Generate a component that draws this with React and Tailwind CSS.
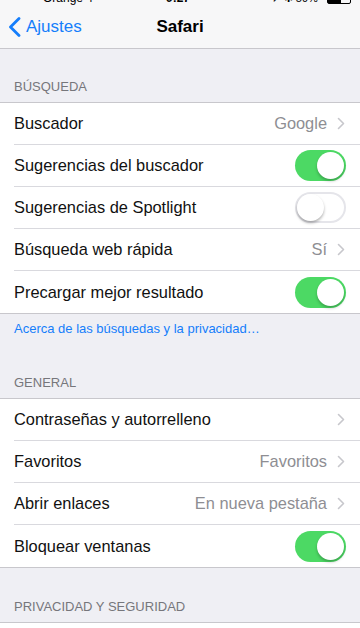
import React from "react";

const font = { fontFamily: '"Liberation Sans", Arial, sans-serif' };

function Chevron() {
  return (
    <svg width="8" height="13" viewBox="0 0 8 13" className="ml-[10px] shrink-0">
      <polyline points="1.5,1.5 6.5,6.5 1.5,11.5" fill="none" stroke="#c7c7cc" strokeWidth="1.6" strokeLinecap="round" strokeLinejoin="round" />
    </svg>
  );
}

function Toggle({ on }) {
  return on ? (
    <div className="w-[51px] h-[31px] rounded-full bg-[#4cd964] relative shrink-0">
      <div className="absolute right-[2px] top-[2px] w-[27px] h-[27px] rounded-full bg-white shadow-[0_2px_3px_rgba(0,0,0,0.25)]" />
    </div>
  ) : (
    <div className="w-[51px] h-[31px] rounded-full bg-white border-2 border-[#e5e5ea] relative shrink-0 box-border">
      <div className="absolute left-0 top-0 w-[27px] h-[27px] rounded-full bg-white shadow-[0_2px_3px_rgba(0,0,0,0.3)]" />
    </div>
  );
}

function Row({ label, value, chevron, toggle, last }) {
  return (
    <div className="pl-[14px] bg-white">
      <div className={`h-[42px] flex items-center pr-[15px] box-border ${last ? "" : "border-b border-[#d9d9de]"}`}>
        <span className="flex-1 text-[16.4px] text-[#111]">{label}</span>
        {value && <span className="text-[16.4px] text-[#8e8e93]">{value}</span>}
        {chevron && <Chevron />}
        {toggle !== undefined && <div className="-mr-[1px]"><Toggle on={toggle} /></div>}
      </div>
    </div>
  );
}

function Group({ children }) {
  return <div className="bg-white border-t border-b border-[#c8c7cc]">{children}</div>;
}

function Header({ children, h = "h-[53px]" }) {
  return (
    <div className={`${h} flex items-end pb-[7px] px-[14px]`}>
      <span className="text-[13px] leading-[16px] text-[#76767b]">{children}</span>
    </div>
  );
}

export default function App() {
  return (
    <div className="w-[360px] min-h-[700px] bg-[#efeff4]" style={font}>
      <div className="bg-[#f7f7f8] border-b border-[#c8c7cc]">
        <div className="h-[5px] overflow-hidden">
          <div className="-mt-[9px] h-[14px] flex items-center text-[12px] leading-[14px] text-black relative">
            <span className="absolute left-[43px]">Orange 4</span>
            <span className="absolute left-[166px] font-bold">9:27</span>
            <span className="absolute left-[262px] text-[11px]">◔ ➚ ✱ 59%</span>
            <span className="absolute left-[327px] top-[3px] w-[24px] h-[10px] border border-black rounded-[2px]">
              <span className="block h-full w-[13px] bg-black" />
            </span>
          </div>
        </div>
        <div className="h-[43px] flex items-center relative">
          <div className="flex items-center pl-[8px] text-[#157efb]">
            <svg width="13" height="20" viewBox="0 0 13 20">
              <polyline points="11,1.5 2.5,10 11,18.5" fill="none" stroke="#157efb" strokeWidth="2.8" strokeLinecap="round" strokeLinejoin="round" />
            </svg>
            <span className="ml-[5px] text-[17px]">Ajustes</span>
          </div>
          <span className="absolute left-0 right-0 text-center text-[17px] font-bold text-black pointer-events-none">Safari</span>
        </div>
      </div>

      <Header>BÚSQUEDA</Header>
      <Group>
        <Row label="Buscador" value="Google" chevron />
        <Row label="Sugerencias del buscador" toggle={true} />
        <Row label="Sugerencias de Spotlight" toggle={false} />
        <Row label="Búsqueda web rápida" value="Sí" chevron />
        <Row label="Precargar mejor resultado" toggle={true} last />
      </Group>
      <div className="pt-[7px] px-[14px] text-[13px] leading-[16px] text-[#157efb]">
        Acerca de las búsquedas y la privacidad…
      </div>
      <Header h="h-[61px]">GENERAL</Header>
      <Group>
        <Row label="Contraseñas y autorrelleno" chevron />
        <Row label="Favoritos" value="Favoritos" chevron />
        <Row label="Abrir enlaces" value="En nueva pestaña" chevron />
        <Row label="Bloquear ventanas" toggle={true} last />
      </Group>
      <Header h="h-[54px]">PRIVACIDAD Y SEGURIDAD</Header>
      <Group>
        <div className="pl-[14px] bg-white">
          <div className="h-[44px] flex items-start pt-[7px] pr-[15px] justify-end">
            <Toggle on={false} />
          </div>
        </div>
      </Group>
    </div>
  );
}
